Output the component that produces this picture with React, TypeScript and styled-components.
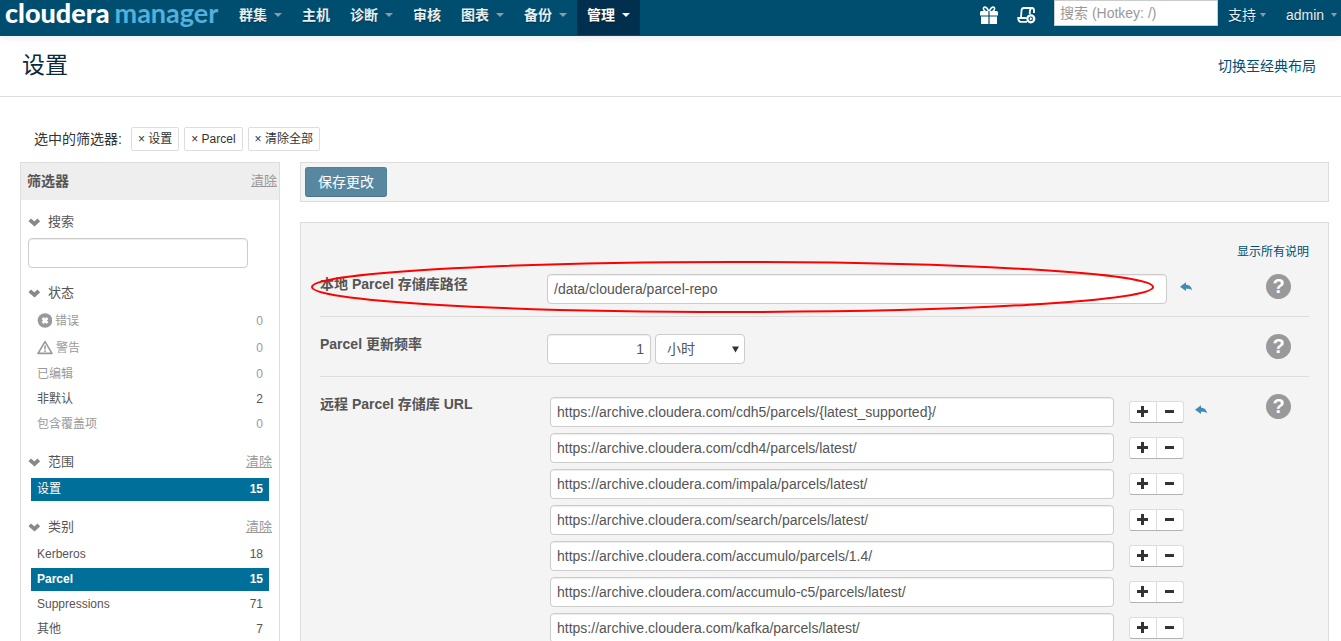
import React from "react";
import styled, { createGlobalStyle, css } from "styled-components";

const GlobalStyle = createGlobalStyle`
  *, *::before, *::after { box-sizing: border-box; }
  html { scrollbar-width: none; }
  body {
    margin: 0;
    background: #fff;
    color: #555;
    font-family: "Liberation Sans", "Noto Sans CJK SC", sans-serif;
    font-size: 14px;
    line-height: 20px;
  }
  button, input, select { font: inherit; color: inherit; margin: 0; }
  button { cursor: pointer; }
  ul, h1, h2, h3 { margin: 0; padding: 0; list-style: none; }
`;

const Page = styled.div`
  min-height: 100vh;
`;

/* ---------- top bar ---------- */

const TopBar = styled.header`
  display: flex;
  align-items: flex-start;
  height: 36px;
  background: #004e6f;
  box-shadow: 0 1px 8px rgba(0, 0, 0, 0.1);
  white-space: nowrap;
`;

const Brand = styled.a`
  display: flex;
  gap: 5px;
  width: 229px;
  padding-left: 5px;
  font-family: Lato, sans-serif;
  font-size: 27px;
  font-weight: 900;
  line-height: 26px;
  color: #fff;
  text-decoration: none;
`;

const BrandAccent = styled.span`
  font-weight: 700;
  color: #53b0dc;
`;

const NavLink = styled.a<{ $active?: boolean; $light?: boolean; $gap?: number }>`
  display: flex;
  align-items: center;
  gap: ${(p) => p.$gap ?? 7}px;
  height: 35px;
  padding: 0 10px 5px;
  font-weight: ${(p) => (p.$light ? 400 : 700)};
  color: ${(p) => (p.$active ? "#fff" : "#e6eef2")};
  background: ${(p) => (p.$active ? "#00304d" : "transparent")};
  text-decoration: none;
  text-shadow: 0 1px 1px rgba(0, 0, 0, 0.4);
`;

const Caret = styled.span<{ $active?: boolean; $small?: boolean }>`
  border: ${(p) => (p.$small ? 3 : 4)}px solid transparent;
  border-top: 4px solid ${(p) => (p.$active ? "#fff" : "#8f9ba3")};
  border-bottom: 0;
`;

const MainNav = styled.nav`
  display: flex;
  flex: 1;
`;

const Tools = styled.div`
  display: flex;
  align-items: flex-start;
`;

const ToolButton = styled.button`
  display: flex;
  width: 37px;
  padding: 6px 0 0;
  border: 0;
  background: none;
  color: #fff;
`;

const GlobalSearch = styled.input`
  width: 164px;
  height: 26px;
  padding: 0 5px;
  border: 1px solid #ccc;
  background: #fff;
  outline: 0;
  &::placeholder { color: #999; opacity: 1; }
`;

const UserMenus = styled.nav`
  display: flex;
  width: 123px;
  overflow: hidden;
`;

/* ---------- page heading ---------- */

const Heading = styled.div`
  display: flex;
  align-items: center;
  justify-content: space-between;
  height: 61px;
  padding: 0 25px 0 22px;
  border-bottom: 1px solid #ddd;
`;

const Title = styled.h1`
  padding-bottom: 2px;
  font-size: 23px;
  font-weight: 400;
  line-height: 30px;
  color: #0b2a40;
`;

const Link = styled.a<{ $small?: boolean }>`
  font-size: ${(p) => (p.$small ? 12 : 14)}px;
  color: #004e6f;
  text-decoration: none;
`;

/* ---------- selected filters ---------- */

const Selected = styled.div`
  display: flex;
  align-items: center;
  gap: 5px;
  padding: 30px 12px 11px 34px;
  color: #333;
`;

const SelectedLabel = styled.span`
  padding-right: 4px;
`;

const Chip = styled.button`
  height: 24px;
  padding: 0 6px;
  border: 1px solid #ddd;
  border-radius: 2px;
  background: #fff;
  font-size: 12px;
  line-height: 20px;
  color: #333;
`;

/* ---------- body ---------- */

const Body = styled.div`
  display: grid;
  grid-template-columns: 260px minmax(0, 1fr);
  gap: 20px;
  padding: 0 12px 20px 20px;
`;

const Sidebar = styled.aside`
  border: 1px solid #ddd;
`;

const SidebarHead = styled.div`
  display: flex;
  align-items: center;
  justify-content: space-between;
  height: 37px;
  padding: 0 2px 2px 6px;
  background: #eee;
`;

const SidebarTitle = styled.h2`
  font-size: 14px;
  line-height: 20px;
`;

const ClearLink = styled.a`
  font-size: 13px;
  color: #999;
  text-decoration: underline;
`;

const Sections = styled.div`
  display: flex;
  flex-direction: column;
  gap: 13px;
  padding: 10px 7px 20px;
`;

const SectionHead = styled.div`
  display: flex;
  align-items: center;
  justify-content: space-between;
  height: 24px;
`;

const SectionToggle = styled.button`
  display: flex;
  align-items: center;
  gap: 8px;
  padding: 0;
  border: 0;
  background: none;
  font-size: 13px;
`;

const field = css`
  height: 30px;
  padding: 0 6px;
  border: 1px solid #ccc;
  border-radius: 4px;
  background: #fff;
  box-shadow: inset 0 1px 1px rgba(0, 0, 0, 0.075);
  color: #555;
  outline: 0;
`;

const FilterSearch = styled.input`
  ${field}
  display: block;
  width: 220px;
  margin-top: 4px;
`;

const FacetList = styled.ul`
  padding: 2px 3px 1px;
`;

const Facet = styled.button<{ $tone: "normal" | "muted" | "active"; $tall?: boolean }>`
  display: flex;
  align-items: center;
  gap: 3px;
  width: 100%;
  height: ${(p) => (p.$tall ? 25 : 23)}px;
  margin-top: 2px;
  padding: 0 6px 2px;
  border: 0;
  background: ${(p) => (p.$tone === "active" ? "#006f99" : "none")};
  color: ${(p) => ({ normal: "#555", muted: "#999", active: "#fff" })[p.$tone]};
  font-size: 12px;
  font-weight: ${(p) => (p.$tone === "active" ? 700 : 400)};
`;

const FacetLabel = styled.span<{ $regular?: boolean }>`
  font-weight: ${(p) => (p.$regular ? 400 : "inherit")};
`;

const Count = styled.span`
  margin-left: auto;
`;

const Content = styled.main`
  display: flex;
  flex-direction: column;
  gap: 20px;
`;

const ActionBar = styled.div`
  display: flex;
  height: 40px;
  padding: 4px;
  border: 1px solid #ddd;
  background: #f4f4f4;
`;

const SaveButton = styled.button`
  width: 82px;
  height: 30px;
  padding: 0;
  border: 1px solid #50819a;
  border-bottom-color: #47748b;
  border-radius: 3px;
  background: #58889f;
  color: #fff;
`;

const Panel = styled.form`
  flex: 1;
  padding: 19px;
  border: 1px solid #ddd;
  background: #f4f4f4;
`;

const PanelTop = styled.div`
  display: flex;
  justify-content: flex-end;
  height: 15px;
`;

const Row = styled.div`
  position: relative;
  display: grid;
  grid-template-columns: 227px minmax(0, 1fr) 25px;
  align-items: start;
  min-height: 60px;
  padding: 17px 18px 12px 0;
  border-bottom: 1px solid #ddd;
`;

const RowLabel = styled.label`
  font-weight: 700;
`;

const Controls = styled.div<{ $end: number }>`
  display: flex;
  align-items: flex-start;
  padding-right: ${(p) => p.$end}px;
`;

const TextField = styled.input`
  ${field}
  flex: 1;
  min-width: 0;
`;

const NumberField = styled.input`
  ${field}
  width: 104px;
  text-align: right;
`;

const SelectWrap = styled.div`
  display: grid;
  align-items: center;
  width: 90px;
  margin-left: 4px;
  & > * { grid-area: 1 / 1; }
  & > svg { justify-self: end; margin-right: 6px; pointer-events: none; }
`;

const Select = styled.select`
  ${field}
  width: 100%;
  padding: 0 20px 0 11px;
  appearance: none;
  box-shadow: none;
`;

const UndoButton = styled.button<{ $gap: number; $top: number }>`
  display: flex;
  padding: ${(p) => p.$top}px 0 0;
  margin-left: ${(p) => p.$gap}px;
  border: 0;
  background: none;
  color: #3f8cb5;
`;

const HelpButton = styled.button`
  width: 25px;
  height: 25px;
  padding: 0;
  border: 0;
  border-radius: 50%;
  background: #999;
  color: #fff;
  font-size: 20px;
  font-weight: 700;
  line-height: 25px;
`;

const UrlList = styled.ul`
  display: flex;
  flex: 1;
  flex-direction: column;
  gap: 6px;
  padding: 3px 0 0 3px;
`;

const UrlItem = styled.li`
  display: flex;
  align-items: center;
  gap: 15px;
`;

const ButtonPair = styled.div`
  display: flex;
  height: 22px;
  border: 1px solid #ddd;
  border-bottom-color: #b3b3b3;
  border-radius: 3px;
  background: #fff;
`;

const StepButton = styled.button`
  display: flex;
  align-items: center;
  justify-content: center;
  width: 26px;
  padding: 0 2px 2px 0;
  border: 0;
  background: none;
  color: #333;
  & + & { width: 27px; border-left: 1px solid #ddd; }
`;

/* Red ring that calls out the first setting. */
const Highlight = styled.svg`
  position: absolute;
  top: 4px;
  left: -9px;
  width: calc(100% - 146px);
  height: 52px;
  fill: none;
  stroke: #f00;
  stroke-width: 2px;
  pointer-events: none;
  & ellipse {
    rx: calc(50% - 1px);
    ry: calc(50% - 1px);
  }
`;

/* ---------- icons ---------- */

const GiftIcon = () => (
  <svg width="18" height="18" viewBox="0 0 18 18" fill="currentColor">
    <path d="M1 5h7.4v4.4H0V6zM9.6 5H17l1 1v3.4H9.6zM1 10.6h7.4V18H1zM9.6 10.6H17V18H9.6z" />
    <path d="M8.6 5C7 1.500 5.800 1 4.900 1 3 1 2.700 4.500 5.400 4.900M9.400 5C11 1.500 12.200 1 13.100 1 15 1 15.300 4.500 12.600 4.900" fill="none" stroke="currentColor" strokeWidth="1.600" />
  </svg>
);

const CommandsIcon = () => (
  <svg width="19" height="18" viewBox="0 0 19 18" fill="none" stroke="currentColor" strokeWidth="1.8">
    <path d="M17 7V4.500C17 2.500 16 2 15 2H7C5.200 2 4.600 3 4.500 4.500L4 11.800" />
    <path d="M15 2C13.600 2 13.200 3 13 4.500L12.700 8" />
    <path d="M9.500 12H1.200C1.200 14.500 2 15.800 3.800 15.800H10" />
    <circle cx="13.800" cy="12.800" r="3.500" strokeWidth="2.200" />
    <path d="M12.800 11l3 1.800-3 1.800z" fill="currentColor" stroke="none" />
  </svg>
);

const ChevronIcon = () => (
  <svg width="12" height="10" viewBox="0 0 12 10" fill="none" stroke="#888" strokeWidth="3.8">
    <path d="M1.700 2.900L6.500 7l4.300-4.100" />
  </svg>
);

const ErrorIcon = () => (
  <svg width="15" height="15" viewBox="0 0 15 15">
    <circle cx="8" cy="7.500" r="7.300" fill="#999" />
    <path d="M5.600 5.100l4.800 4.800M10.400 5.100l-4.800 4.800" stroke="#fff" strokeWidth="2.800" />
  </svg>
);

const WarningIcon = () => (
  <svg width="16" height="15" viewBox="0 0 16 15" fill="none" stroke="#999">
    <path d="M8 1.600L15 13.400H1z" strokeWidth="1.600" strokeLinejoin="round" />
    <path d="M8 5.500v4M8 10.500v1.500" strokeWidth="1.600" />
  </svg>
);

const UndoIcon = () => (
  <svg width="12" height="10" viewBox="0 0 12 10" fill="currentColor">
    <path d="M0 4.700L6 0.300v2.400C9.300 2.800 11.700 4.600 12 8.300 10.500 7 8.500 6.600 6 6.700v2.400z" />
  </svg>
);

const PlusIcon = () => (
  <svg width="11" height="11" viewBox="0 0 11 11" fill="currentColor">
    <path d="M4 0h3v4h4v3H7v4H4V7H0V4h4z" />
  </svg>
);

const MinusIcon = () => (
  <svg width="9" height="11" viewBox="0 0 9 11" fill="currentColor">
    <path d="M0 4h9v3H0z" />
  </svg>
);

/* ---------- data ---------- */

const navItems = [
  { label: "群集", menu: true },
  { label: "主机" },
  { label: "诊断", menu: true },
  { label: "审核" },
  { label: "图表", menu: true },
  { label: "备份", menu: true },
  { label: "管理", menu: true, active: true },
];

type FacetData = {
  label: string;
  count: number;
  tone?: "normal" | "muted" | "active";
  regular?: boolean;
  icon?: React.ReactNode;
};

const sections: { title: string; clear?: boolean; facets: FacetData[] }[] = [
  {
    title: "状态",
    facets: [
      { label: "错误", count: 0, tone: "muted", icon: <ErrorIcon /> },
      { label: "警告", count: 0, tone: "muted", icon: <WarningIcon /> },
      { label: "已编辑", count: 0, tone: "muted" },
      { label: "非默认", count: 2 },
      { label: "包含覆盖项", count: 0, tone: "muted" },
    ],
  },
  {
    title: "范围",
    clear: true,
    facets: [{ label: "设置", count: 15, tone: "active", regular: true }],
  },
  {
    title: "类别",
    clear: true,
    facets: [
      { label: "Kerberos", count: 18 },
      { label: "Parcel", count: 15, tone: "active" },
      { label: "Suppressions", count: 71 },
      { label: "其他", count: 7 },
    ],
  },
];

const urls = [
  "https://archive.cloudera.com/cdh5/parcels/{latest_supported}/",
  "https://archive.cloudera.com/cdh4/parcels/latest/",
  "https://archive.cloudera.com/impala/parcels/latest/",
  "https://archive.cloudera.com/search/parcels/latest/",
  "https://archive.cloudera.com/accumulo/parcels/1.4/",
  "https://archive.cloudera.com/accumulo-c5/parcels/latest/",
  "https://archive.cloudera.com/kafka/parcels/latest/",
];

const Help = () => <HelpButton type="button">?</HelpButton>;

export default function App() {
  return (
    <Page>
      <GlobalStyle />
      <TopBar>
        <Brand href="#">
          <span>cloudera</span>
          <BrandAccent>manager</BrandAccent>
        </Brand>
        <MainNav>
          {navItems.map((n) => (
            <NavLink key={n.label} href="#" $active={n.active}>
              {n.label}
              {n.menu && <Caret $active={n.active} />}
            </NavLink>
          ))}
        </MainNav>
        <Tools>
          <ToolButton type="button" aria-label="gift"><GiftIcon /></ToolButton>
          <ToolButton type="button" aria-label="commands"><CommandsIcon /></ToolButton>
          <GlobalSearch type="search" placeholder="搜索 (Hotkey: /)" />
          <UserMenus>
            <NavLink href="#" $light $gap={4}>支持<Caret $small /></NavLink>
            <NavLink href="#" $light>admin<Caret $small /></NavLink>
          </UserMenus>
        </Tools>
      </TopBar>

      <Heading>
        <Title>设置</Title>
        <Link href="#">切换至经典布局</Link>
      </Heading>

      <Selected>
        <SelectedLabel>选中的筛选器:</SelectedLabel>
        {["设置", "Parcel", "清除全部"].map((c) => (
          <Chip key={c} type="button">× {c}</Chip>
        ))}
      </Selected>

      <Body>
        <Sidebar>
          <SidebarHead>
            <SidebarTitle>筛选器</SidebarTitle>
            <ClearLink href="#">清除</ClearLink>
          </SidebarHead>
          <Sections>
            <section>
              <SectionHead>
                <SectionToggle as="label" htmlFor="filter"><ChevronIcon />搜索</SectionToggle>
              </SectionHead>
              <FilterSearch id="filter" type="text" />
            </section>
            {sections.map((s) => (
              <section key={s.title}>
                <SectionHead>
                  <SectionToggle type="button"><ChevronIcon />{s.title}</SectionToggle>
                  {s.clear && <ClearLink href="#">清除</ClearLink>}
                </SectionHead>
                <FacetList>
                  {s.facets.map((f) => (
                    <li key={f.label}>
                      <Facet type="button" $tone={f.tone ?? "normal"} $tall={!!f.icon}>
                        {f.icon}
                        <FacetLabel $regular={f.regular}>{f.label}</FacetLabel>
                        <Count>{f.count}</Count>
                      </Facet>
                    </li>
                  ))}
                </FacetList>
              </section>
            ))}
          </Sections>
        </Sidebar>

        <Content>
          <ActionBar>
            <SaveButton type="button">保存更改</SaveButton>
          </ActionBar>
          <Panel>
            <PanelTop>
              <Link href="#" $small>显示所有说明</Link>
            </PanelTop>
            <Row>
              <RowLabel htmlFor="repo">本地 Parcel 存储库路径</RowLabel>
              <Controls $end={74}>
                <TextField id="repo" type="text" defaultValue="/data/cloudera/parcel-repo" />
                <UndoButton type="button" aria-label="undo" $gap={13} $top={8}><UndoIcon /></UndoButton>
              </Controls>
              <Help />
              <Highlight><ellipse cx="50%" cy="50%" /></Highlight>
            </Row>
            <Row>
              <RowLabel htmlFor="freq">Parcel 更新频率</RowLabel>
              <Controls $end={0}>
                <NumberField id="freq" type="text" defaultValue="1" />
                <SelectWrap>
                  <Select aria-label="单位" defaultValue="小时">
                    <option>小时</option>
                  </Select>
                  <svg width="7" height="7" viewBox="0 0 7 7"><path d="M0 0.500h7L3.500 6.500z" fill="#333" /></svg>
                </SelectWrap>
              </Controls>
              <Help />
            </Row>
            <Row>
              <RowLabel htmlFor="url0">远程 Parcel 存储库 URL</RowLabel>
              <Controls $end={59}>
                <UrlList>
                  {urls.map((u, i) => (
                    <UrlItem key={u}>
                      <TextField id={`url${i}`} aria-label={u} type="text" defaultValue={u} />
                      <ButtonPair>
                        <StepButton type="button" aria-label="add"><PlusIcon /></StepButton>
                        <StepButton type="button" aria-label="remove"><MinusIcon /></StepButton>
                      </ButtonPair>
                    </UrlItem>
                  ))}
                </UrlList>
                <UndoButton type="button" aria-label="undo" $gap={11} $top={11}><UndoIcon /></UndoButton>
              </Controls>
              <Help />
            </Row>
          </Panel>
        </Content>
      </Body>
    </Page>
  );
}
